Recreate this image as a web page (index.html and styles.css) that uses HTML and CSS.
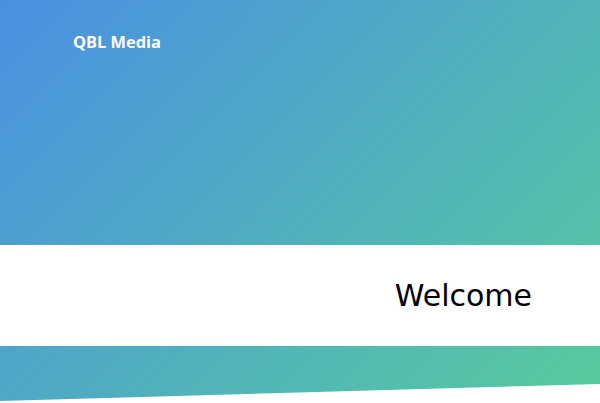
FILE: index.html
```html
<!DOCTYPE html>
<html lang="en">
<head>
<meta charset="utf-8">
<title>QBL Media</title>
<link rel="stylesheet" href="styles.css">
</head>
<body>
<div class="page">
  <header class="hero">
    <div class="logo">QBL Media</div>
  </header>
  <section class="welcome">
    <h1 class="welcome-title">Welcome</h1>
  </section>
  <div class="strip"></div>
  <div class="wedge"></div>
</div>
</body>
</html>
```
FILE: styles.css
```css
html, body {
  margin: 0;
  padding: 0;
}
body {
  width: 600px;
  height: 403px;
  overflow: hidden;
}
.page {
  height: 403px;
  display: flex;
  flex-direction: column;
  background: linear-gradient(135deg, #4a90e2 0%, #57cb9c 100%);
}
.hero {
  height: 245px;
  box-sizing: border-box;
  padding: 31px 0 0 73px;
}
.logo {
  font-family: "Open Sans", sans-serif;
  font-weight: 700;
  font-size: 16.4px;
  color: #ffffff;
  line-height: 22px;
}
.welcome {
  height: 101px;
  background: #ffffff;
  display: flex;
  align-items: center;
  justify-content: flex-end;
  padding-right: 68px;
}
.welcome-title {
  margin: 0;
  font-family: "DejaVu Sans", sans-serif;
  font-weight: 400;
  font-size: 30px;
  color: #000000;
  line-height: 1;
}
.strip {
  height: 38px;
}
.wedge {
  flex: 1;
  background: #ffffff;
  clip-path: polygon(0 89%, 100% 0, 100% 100%, 0 100%);
}
```
